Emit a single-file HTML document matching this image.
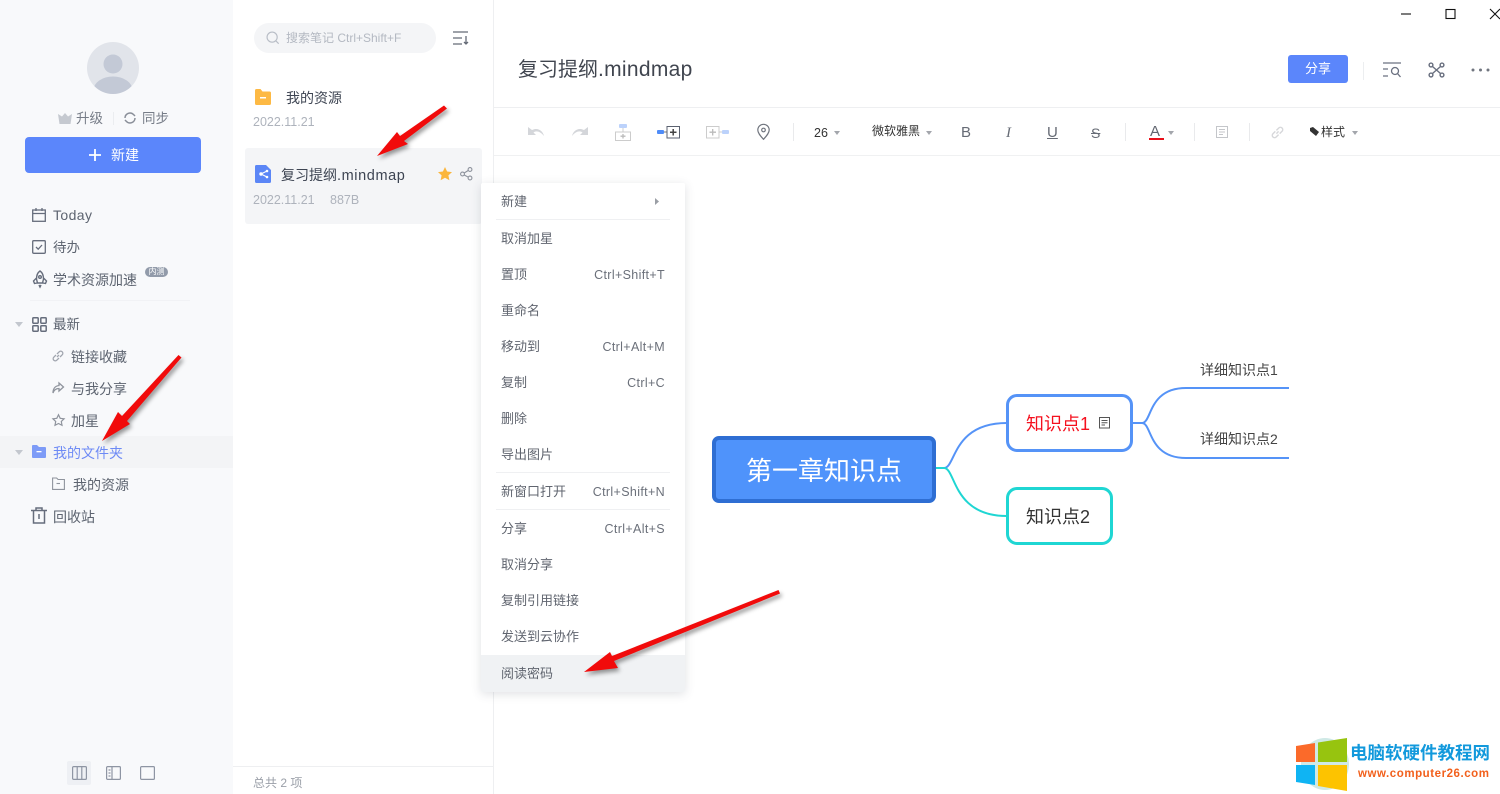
<!DOCTYPE html>
<html lang="zh"><head><meta charset="utf-8"><title>复习提纲.mindmap</title>
<style>
*{box-sizing:border-box}
html,body{margin:0;padding:0;width:1500px;height:794px;overflow:hidden;background:#fff}
body{position:relative;font-family:"Liberation Sans","Noto Sans CJK SC",sans-serif;color:#5b6270;font-size:13px}
.a{position:absolute}
.t{position:absolute;white-space:nowrap;line-height:20px;height:20px}
.side{left:0;top:0;width:233px;height:794px;background:#f8f9fb}
.menu{left:481px;top:183px;width:204px;height:509px;background:#fff;box-shadow:0 2px 10px rgba(60,70,90,.16);border-radius:2px}
.sep{position:absolute;height:1px;background:#eff0f2;left:496px;width:174px}
.mi{position:absolute;left:501px;font-size:13px;line-height:20px;color:#60656f;white-space:nowrap;margin-top:1px}
.ms{position:absolute;right:835px;font-size:12.5px;letter-spacing:.35px;line-height:20px;color:#6b707a;white-space:nowrap;margin-top:1px}
svg{position:absolute;overflow:visible}
.nav{font-size:13.5px;color:#5d6470}
</style></head><body>

<div class="a side"></div>
<svg style="left:87px;top:42px" width="52" height="52" viewBox="0 0 52 52"><defs><clipPath id="c"><circle cx="26" cy="26" r="26"/></clipPath></defs><circle cx="26" cy="26" r="26" fill="#e1e4ea"/><circle cx="26" cy="22" r="9.500" fill="#c3c9d6"/><ellipse cx="26" cy="48" rx="19.500" ry="13.500" fill="#c3c9d6" clip-path="url(#c)"/></svg>

<svg style="left:57px;top:112px" width="16" height="14" viewBox="0 0 16 14"><path d="M1 2l4 2.500L8 1l3 3.500L15 2l-1.500 10h-11z" fill="#c5c9d0"/></svg>
<div class="t" style="left:76px;top:109px;color:#777d88;font-size:13.500px">升级</div>
<div class="a" style="left:113px;top:112px;width:1px;height:13px;background:#ebedf0"></div>
<svg style="left:123px;top:111px" width="14" height="14" viewBox="0 0 14 14" fill="none" stroke="#8a8f99" stroke-width="1.500"><path d="M2 7a5 5 0 0 1 8.500-3.500L12 5M12 7a5 5 0 0 1-8.500 3.500L2 9"/></svg>
<div class="t" style="left:142px;top:109px;color:#777d88;font-size:13.500px">同步</div>

<div class="a" style="left:25px;top:137px;width:176px;height:36px;background:#5b86fb;border-radius:4px"></div>
<svg style="left:89px;top:149px" width="12" height="12"><path d="M6 0v12M0 6h12" stroke="#fff" stroke-width="1.800"/></svg>
<div class="t" style="left:111px;top:145px;color:#fff;font-size:14px">新建</div>

<svg style="left:32px;top:208px" width="14" height="14" viewBox="0 0 14 14" fill="none" stroke="#666d7c" stroke-width="1.300"><rect x=".7" y="2" width="12.600" height="11.300"/><path d="M.7 5.500h12.600M4 0v3M10 0v3"/></svg>
<div class="t nav" style="left:53px;top:205px;font-size:14px;letter-spacing:.4px">Today</div>
<svg style="left:32px;top:240px" width="14" height="14" viewBox="0 0 14 14" fill="none" stroke="#666d7c" stroke-width="1.300"><rect x=".7" y=".7" width="12.600" height="12.600" rx="1"/><path d="M4 7l2.200 2.200L10 5"/></svg>
<div class="t nav" style="left:53px;top:238px">待办</div>
<svg style="left:32px;top:270px" width="16" height="18" viewBox="0 0 16 18" fill="none" stroke="#666d7c" stroke-width="1.400"><path d="M8 1c3 2 3.500 5 3.500 8l-1 4h-5l-1-4C4.500 6 5 3 8 1zM4.500 8L1.500 11l1 2.500 2.500-.5M11.500 8l3 3-1 2.500-2.500-.5M7 15l1 2 1-2"/><circle cx="8" cy="7" r="1.300"/></svg>
<div class="t nav" style="left:53px;top:270px;font-size:14px">学术资源加速</div>
<div class="a" style="left:145px;top:267px;width:23px;height:10px;background:#929baa;border-radius:5px;color:#fff;font-size:8px;line-height:10px;text-align:center">内测</div>
<div class="a" style="left:30px;top:300px;width:160px;height:1px;background:#f1f2f5"></div>

<svg style="left:15px;top:322px" width="8" height="5"><path d="M0 0h8L4 5z" fill="#c3c7ce"/></svg>
<svg style="left:32px;top:317px" width="15" height="15" viewBox="0 0 15 15" fill="none" stroke="#666d7c" stroke-width="1.500"><rect x=".8" y=".8" width="5.400" height="5.400" rx=".8"/><rect x="8.800" y=".8" width="5.400" height="5.400" rx=".8"/><rect x=".8" y="8.800" width="5.400" height="5.400" rx=".8"/><rect x="8.800" y="8.800" width="5.400" height="5.400" rx=".8"/></svg>
<div class="t nav" style="left:53px;top:315px">最新</div>
<svg style="left:52px;top:350px" width="12" height="12" viewBox="0 0 12 12" fill="none" stroke="#a0a5ae" stroke-width="1.300"><path d="M5 7l2-2M4 5L1.800 7.200a2 2 0 0 0 3 3L7 8M5 4l2.200-2.200a2 2 0 0 1 3 3L8 7"/></svg>
<div class="t nav" style="left:71px;top:347px;font-size:14px">链接收藏</div>
<svg style="left:52px;top:382px" width="12" height="12" viewBox="0 0 12 12" fill="none" stroke="#8f949d" stroke-width="1.300"><path d="M7 1l4.500 4L7 9V6.500C4 6.500 2 8 1 11c0-4 2-7 6-7.500z"/></svg>
<div class="t nav" style="left:71px;top:379px;font-size:14px">与我分享</div>
<svg style="left:52px;top:414px" width="13" height="12" viewBox="0 0 13 12" fill="none" stroke="#8f949d" stroke-width="1.200"><path d="M6.500.8l1.700 3.500 3.900.5-2.800 2.700.7 3.800-3.500-1.800-3.500 1.800.7-3.800L.9 4.800l3.900-.5z"/></svg>
<div class="t nav" style="left:71px;top:411px;font-size:14px">加星</div>

<div class="a" style="left:0;top:436px;width:233px;height:32px;background:#f3f4f6"></div>
<svg style="left:15px;top:450px" width="8" height="5"><path d="M0 0h8L4 5z" fill="#c3c7ce"/></svg>
<svg style="left:32px;top:445px" width="14" height="13" viewBox="0 0 14 13"><path d="M0 1q0-1 1-1h4l2 2h6q1 0 1 1v9q0 1-1 1H1q-1 0-1-1z" fill="#7d9bf7"/><rect x="4.500" y="6" width="5" height="1.300" fill="#fff"/></svg>
<div class="t nav" style="left:53px;top:443px;color:#6d8af5;font-size:14px">我的文件夹</div>
<svg style="left:52px;top:477px" width="13" height="13" viewBox="0 0 13 13" fill="none" stroke="#8f949d" stroke-width="1.100"><path d="M.6 1h4l1.500 1.500h6.300v9.900H.6z"/><path d="M4.500 6.500h3.500"/></svg>
<div class="t nav" style="left:73px;top:475px;font-size:14px">我的资源</div>
<svg style="left:31px;top:507px" width="16" height="17" viewBox="0 0 16 17" fill="none" stroke="#666d7c" stroke-width="1.500"><path d="M0 3.500h16M5 3V1h6v2M2.500 3.500V16h11V3.500M8 7v5"/></svg>
<div class="t nav" style="left:53px;top:507px;font-size:14px">回收站</div>

<div class="a" style="left:67px;top:761px;width:24px;height:24px;background:#eef0f4;border-radius:2px"></div>
<svg style="left:72px;top:766px" width="15" height="14" viewBox="0 0 15 14" fill="none" stroke="#8e95a3" stroke-width="1.200"><rect x=".6" y=".6" width="13.800" height="12.800" rx="1"/><path d="M5.200 1v12M9.800 1v12"/></svg>
<svg style="left:106px;top:766px" width="15" height="14" viewBox="0 0 15 14" fill="none" stroke="#8e95a3" stroke-width="1.200"><rect x=".6" y=".6" width="13.800" height="12.800" rx="1"/><path d="M6 1v12M2.500 4h2M2.500 7h2M2.500 10h2"/></svg>
<svg style="left:140px;top:766px" width="15" height="14" viewBox="0 0 15 14" fill="none" stroke="#8e95a3" stroke-width="1.200"><rect x=".6" y=".6" width="13.800" height="12.800" rx="1"/></svg>

<!-- list column -->
<div class="a" style="left:493px;top:0;width:1px;height:794px;background:#eeeff1"></div>
<div class="a" style="left:254px;top:23px;width:182px;height:30px;background:#f4f5f7;border-radius:15px"></div>
<svg style="left:266px;top:31px" width="14" height="14" viewBox="0 0 16 16" fill="none" stroke="#b8bdc6" stroke-width="1.300"><circle cx="7" cy="7" r="5.800"/><path d="M11.500 11.500L14.500 14.500"/></svg>
<div class="t" style="left:286px;top:28px;font-size:12px;color:#b4b9c2">搜索笔记 Ctrl+Shift+F</div>
<svg style="left:453px;top:31px" width="16" height="14" viewBox="0 0 16 14" fill="none" stroke="#646a76" stroke-width="1.300"><path d="M0 1h15M0 7h9M0 13h9M13 5v8M11 11l2 2 2-2"/></svg>

<svg style="left:255px;top:89px" width="16" height="16" viewBox="0 0 16 16"><path d="M0 1.500Q0 0 1.500 0h4l2 2.500h7Q16 2.500 16 4v10.500q0 1.500-1.500 1.500h-13Q0 16 0 14.500z" fill="#fdb944"/><rect x="5" y="8" width="6" height="1.500" fill="#fff"/></svg>
<div class="t" style="left:286px;top:88px;color:#3d4452;font-size:14px">我的资源</div>
<div class="t" style="left:253px;top:112px;font-size:12.500px;color:#aeb3bc">2022.11.21</div>

<div class="a" style="left:245px;top:148px;width:237px;height:76px;background:#f4f5f7;border-radius:3px"></div>
<svg style="left:255px;top:165px" width="16" height="18" viewBox="0 0 16 18"><path d="M1.500 0H11l5 5v11.500q0 1.500-1.500 1.500h-13Q0 18 0 16.500v-15Q0 0 1.500 0z" fill="#5b86f6"/><g fill="#fff"><circle cx="12" cy="6" r="1.300"/><circle cx="12" cy="12" r="1.300"/><circle cx="6" cy="9" r="1.700"/></g><path d="M6 9l6-3M6 9l6 3" stroke="#fff"/></svg>
<div class="t" style="left:281px;top:165px;font-size:14px;color:#3d4452">复习提纲<span style="font-size:14.500px;letter-spacing:.6px">.mindmap</span></div>
<svg style="left:438px;top:167px" width="14" height="14" viewBox="0 0 14 14"><path d="M7 0l2.100 4.500 4.900.6-3.600 3.300 1 4.800L7 10.800l-4.400 2.400 1-4.800L0 5.100l4.900-.6z" fill="#fbb63c"/></svg>
<svg style="left:460px;top:167px" width="13" height="14" viewBox="0 0 13 14" fill="none" stroke="#8d929c" stroke-width="1.100"><circle cx="10" cy="2.500" r="1.900"/><circle cx="10" cy="11" r="1.900"/><circle cx="2.500" cy="7" r="1.900"/><path d="M4.200 6l4.200-2.600M4.200 8l4.200 2.200"/></svg>
<div class="t" style="left:253px;top:190px;font-size:12.500px;color:#aeb3bc">2022.11.21</div>
<div class="t" style="left:330px;top:190px;font-size:12.500px;color:#aeb3bc">887B</div>

<div class="a" style="left:233px;top:766px;width:260px;height:1px;background:#eeeff1"></div>
<div class="t" style="left:253px;top:773px;font-size:12px;color:#9a9fa8">总共 2 项</div>

<!-- window controls -->
<svg style="left:1400px;top:8px" width="100" height="12" fill="none" stroke="#111" stroke-width="1.100"><path d="M1 6h10"/><rect x="46" y="1.500" width="9" height="9"/><path d="M90 1l10 10M100 1L90 11"/></svg>

<!-- header -->
<div class="t" style="left:518px;top:56px;height:28px;line-height:28px;font-size:20px;color:#40454f">复习提纲<span style="font-size:21px;letter-spacing:.3px">.mindmap</span></div>
<div class="a" style="left:1288px;top:55px;width:60px;height:28px;background:#5b86fb;border-radius:3px;color:#fff;font-size:13px;line-height:28px;text-align:center">分享</div>
<div class="a" style="left:1363px;top:62px;width:1px;height:18px;background:#eceef0"></div>
<svg style="left:1383px;top:62px" width="18" height="16" viewBox="0 0 18 16" fill="none" stroke="#6a7080" stroke-width="1.300"><path d="M0 1h18M0 7h5M0 14h5"/><circle cx="12" cy="9" r="3.500"/><path d="M14.500 11.500L17.500 15"/></svg>
<svg style="left:1428px;top:62px" width="17" height="16" viewBox="0 0 17 16" fill="none" stroke="#6a7080" stroke-width="1.400"><circle cx="3" cy="3" r="1.900"/><circle cx="14" cy="3" r="1.900"/><circle cx="3" cy="13" r="1.900"/><circle cx="14" cy="13" r="1.900"/><path d="M4.500 4.500l8 7M12.500 4.500l-8 7"/></svg>
<svg style="left:1471px;top:68px" width="19" height="4" fill="#70757f"><circle cx="2" cy="2" r="1.500"/><circle cx="9.500" cy="2" r="1.500"/><circle cx="17" cy="2" r="1.500"/></svg>
<div class="a" style="left:494px;top:107px;width:1006px;height:1px;background:#eeeff1"></div>
<div class="a" style="left:494px;top:155px;width:1006px;height:1px;background:#f0f1f2"></div>

<!-- toolbar -->
<svg style="left:528px;top:126px" width="17" height="11" viewBox="0 0 17 11"><path d="M0 1v8h8L5.500 6.500C8 4.500 12 5 16 10c-1-5-6-9-12-6z" fill="#d4d6da"/></svg>
<svg style="left:571px;top:126px" width="17" height="11" viewBox="0 0 17 11"><path d="M17 1v8H9l2.500-2.500C9 4.500 5 5 1 10c1-5 6-9 12-6z" fill="#d4d6da"/></svg>
<svg style="left:615px;top:124px" width="16" height="17" viewBox="0 0 16 17" fill="none"><rect x="4" y="0" width="8" height="4" rx="1" fill="#bcd2fb"/><path d="M8 4v4" stroke="#ccc"/><rect x=".5" y="8" width="15" height="8.500" stroke="#ccc"/><path d="M8 10v4.500M5.500 12.200h5" stroke="#bbb" stroke-width="1.300"/></svg>
<svg style="left:657px;top:126px" width="23" height="13" viewBox="0 0 23 13" fill="none"><rect x="0" y="4" width="7" height="4" rx="1" fill="#4f8cf8"/><path d="M7 6h3" stroke="#777"/><rect x="10" y=".5" width="12.500" height="11.500" stroke="#5b6270"/><path d="M16.200 3v6.500M13 6.200h6.500" stroke="#444" stroke-width="1.500"/></svg>
<svg style="left:706px;top:126px" width="23" height="13" viewBox="0 0 23 13" fill="none"><rect x="16" y="4" width="7" height="4" rx="1" fill="#bcd2fb"/><path d="M13 6h3" stroke="#ccc"/><rect x=".5" y=".5" width="12.500" height="11.500" stroke="#ccc"/><path d="M6.700 3v6.500M3.500 6.200H10" stroke="#bbb" stroke-width="1.300"/></svg>
<svg style="left:757px;top:124px" width="13" height="16" viewBox="0 0 13 16" fill="none" stroke="#70757e" stroke-width="1.200"><path d="M6.500 15.300C3 11.500 .8 8.800.8 6a5.700 5.700 0 0 1 11.400 0c0 2.800-2.200 5.500-5.700 9.300z"/><circle cx="6.500" cy="6" r="1.800"/></svg>
<div class="a" style="left:793px;top:123px;width:1px;height:18px;background:#e9eaec"></div>
<div class="t" style="left:814px;top:123px;font-size:12.500px;color:#333">26</div>
<svg style="left:834px;top:131px" width="6" height="4"><path d="M0 0h6L3 4z" fill="#a3a6ac"/></svg>
<div class="t" style="left:872px;top:121px;font-size:12px;color:#333">微软雅黑</div>
<svg style="left:926px;top:131px" width="6" height="4"><path d="M0 0h6L3 4z" fill="#a3a6ac"/></svg>
<div class="t" style="left:961px;top:123px;font-size:15px;color:#666b75">B</div>
<div class="t" style="left:1006px;top:123px;font-size:15px;font-style:italic;font-family:'Liberation Serif',serif;color:#666b75">I</div>
<div class="t" style="left:1047px;top:123px;font-size:15px;color:#666b75;text-decoration:underline">U</div>
<div class="t" style="left:1091px;top:123px;font-size:14px;color:#666b75;text-decoration:line-through">S</div>
<div class="a" style="left:1125px;top:123px;width:1px;height:18px;background:#e9eaec"></div>
<div class="t" style="left:1150px;top:122px;font-size:15px;color:#60656f">A</div>
<div class="a" style="left:1149px;top:138px;width:15px;height:2px;background:#e8101a"></div>
<svg style="left:1168px;top:131px" width="6" height="4"><path d="M0 0h6L3 4z" fill="#a3a6ac"/></svg>
<div class="a" style="left:1194px;top:123px;width:1px;height:18px;background:#e9eaec"></div>
<svg style="left:1216px;top:126px" width="12" height="12" viewBox="0 0 12 12" fill="none" stroke="#c4c6ca"><rect x=".5" y=".5" width="11" height="11"/><path d="M3 3.500h6M3 6h6M3 8.500h4"/></svg>
<div class="a" style="left:1249px;top:123px;width:1px;height:18px;background:#e9eaec"></div>
<svg style="left:1271px;top:126px" width="13" height="13" viewBox="0 0 12 12" fill="none" stroke="#d6d7da" stroke-width="1.300"><path d="M5 7l2-2M4 5L1.800 7.200a2 2 0 0 0 3 3L7 8M5 4l2.200-2.200a2 2 0 0 1 3 3L8 7"/></svg>
<svg style="left:1309px;top:127px" width="11" height="10" viewBox="0 0 11 10"><path d="M1 1l3-1 6 5-3 4-6-5z" fill="#333"/></svg>
<div class="t" style="left:1321px;top:122px;font-size:12px;color:#333">样式</div>
<svg style="left:1352px;top:131px" width="6" height="4"><path d="M0 0h6L3 4z" fill="#a3a6ac"/></svg>

<!-- mindmap -->
<svg style="left:0;top:0" width="1500" height="794" fill="none" stroke-width="2">
<path d="M936 468h8c12 0 8-45 63-45" stroke="#5593f7"/>
<path d="M936 468h8c12 0 8 48 63 48" stroke="#1fd6d3"/>
<path d="M1132 423h10c10 0 6-35 44-35h103" stroke="#5593f7"/>
<path d="M1132 423h10c10 0 6 35 44 35h103" stroke="#5593f7"/>
</svg>
<div class="a" style="left:712px;top:436px;width:224px;height:67px;background:#4f93fb;border:4px solid #2e6ed3;border-radius:7px;color:#fff;font-size:26px;line-height:63px;text-align:center">第一章知识点</div>
<div class="a" style="left:1006px;top:394px;width:127px;height:58px;background:#fff;border:3px solid #5593f7;border-radius:11px"></div>
<div class="t" style="left:1026px;top:414px;font-size:18px;color:#f5101e">知识点1</div>
<svg style="left:1099px;top:417px" width="12" height="12" viewBox="0 0 12 12" fill="none" stroke="#555"><rect x=".5" y=".5" width="10" height="10.500"/><path d="M2.500 3.500h6M2.500 5.800h6M2.500 8h3.500"/></svg>
<div class="a" style="left:1006px;top:487px;width:107px;height:58px;background:#fff;border:3px solid #1fd6d3;border-radius:11px"></div>
<div class="t" style="left:1026px;top:507px;font-size:18px;color:#333">知识点2</div>
<div class="t" style="left:1200px;top:360px;font-size:14px;color:#444">详细知识点1</div>
<div class="t" style="left:1200px;top:429px;font-size:14px;color:#444">详细知识点2</div>

<!-- context menu -->
<div class="a menu"></div>
<div class="a" style="left:481px;top:655px;width:204px;height:37px;background:#f0f2f4;border-radius:0 0 2px 2px"></div>
<div class="mi" style="top:191px">新建</div>
<svg style="left:655px;top:198px" width="4" height="7"><path d="M0 0l4 3.500L0 7z" fill="#9a9ea5"/></svg>
<div class="sep" style="top:219px"></div>
<div class="mi" style="top:228px">取消加星</div>
<div class="mi" style="top:264px">置顶</div><div class="ms" style="top:264px">Ctrl+Shift+T</div>
<div class="mi" style="top:300px">重命名</div>
<div class="mi" style="top:336px">移动到</div><div class="ms" style="top:336px">Ctrl+Alt+M</div>
<div class="mi" style="top:372px">复制</div><div class="ms" style="top:372px">Ctrl+C</div>
<div class="mi" style="top:408px">删除</div>
<div class="mi" style="top:444px">导出图片</div>
<div class="sep" style="top:472px"></div>
<div class="mi" style="top:481px">新窗口打开</div><div class="ms" style="top:481px">Ctrl+Shift+N</div>
<div class="sep" style="top:509px"></div>
<div class="mi" style="top:518px">分享</div><div class="ms" style="top:518px">Ctrl+Alt+S</div>
<div class="mi" style="top:554px">取消分享</div>
<div class="mi" style="top:590px">复制引用链接</div>
<div class="mi" style="top:626px">发送到云协作</div>
<div class="mi" style="top:663px">阅读密码</div>

<!-- arrows -->
<svg style="left:0;top:0;filter:drop-shadow(2px 3px 2px rgba(0,0,0,.4))" width="1500" height="794">
<g fill="#f10b0b">
<path d="M444 105.500L447 108.500 404 141 408 144 377 156 397 132 400 136z"/>
<path d="M178.500 355L181.500 357.500 127 421 130 424 102 441 118 412 122 416z"/>
<path d="M778.500 590L780 593.500 614 661 618 668 584 672 610 652 612 656z"/>
</g></svg>

<!-- watermark -->
<svg style="left:1296px;top:736px" width="56" height="56" viewBox="0 0 56 56">
<ellipse cx="29" cy="28" rx="24" ry="26" fill="#cfe9e6"/>
<path d="M0 10l19-3v19H0z" fill="#fb6a2a"/>
<path d="M22 6.500L51 2v24H22z" fill="#97c40f"/>
<path d="M0 29h19v20L0 46z" fill="#0fb4f3"/>
<path d="M22 29h29v26l-29-5z" fill="#fdc300"/>
</svg>
<div class="t" style="left:1350px;top:743px;font-size:17.500px;font-weight:bold;color:#1299dc">电脑软硬件教程网</div>
<div class="t" style="left:1358px;top:764px;font-size:11.500px;font-weight:bold;color:#f2601c;letter-spacing:.55px">www.computer26.com</div>
</body></html>
